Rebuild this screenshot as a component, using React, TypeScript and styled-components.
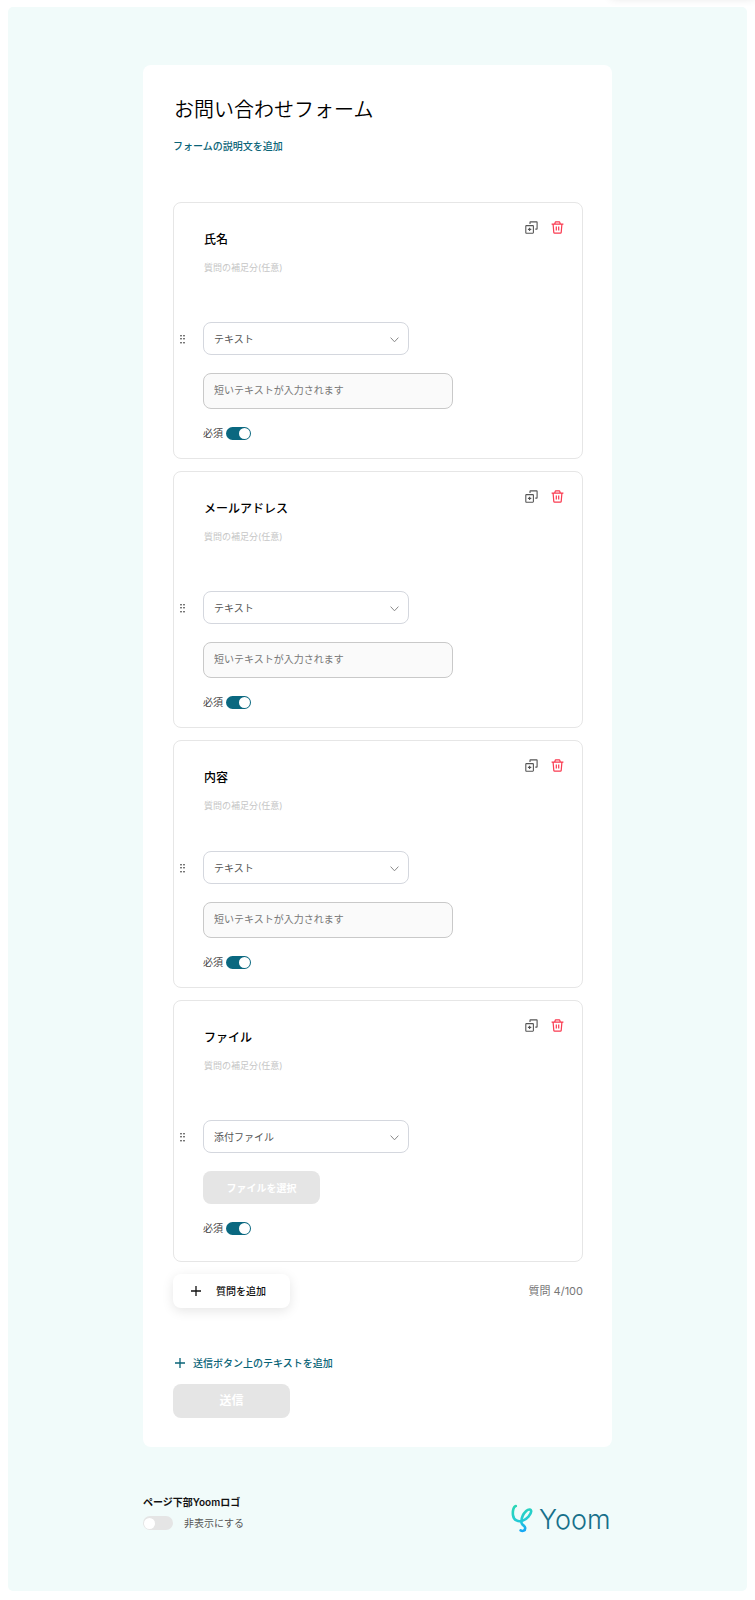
import React from "react";
import styled, { createGlobalStyle } from "styled-components";

const teal = "#0a6478";

const GlobalStyle = createGlobalStyle`
  *, *::before, *::after { box-sizing: border-box; }
  body {
    margin: 0;
    background: #fff;
    color: #111;
    font-family: Inter, "Noto Sans CJK JP", sans-serif;
    font-size: 10px;
    line-height: 16px;
  }
  button, input, select, textarea { font: inherit; color: inherit; margin: 0; }
  button { cursor: pointer; }
`;

const Page = styled.main`
  position: relative;
  margin: 7px 8px 10px;
  padding: 58px 16px 57px;
  border-radius: 5px;
  background: #f1fbfa;
  display: flex;
  flex-direction: column;
  align-items: center;
`;

const TopBarShadow = styled.div`
  position: absolute;
  top: -29px;
  right: -8px;
  width: 144px;
  height: 20px;
  box-shadow: 0 0 10px rgba(0, 0, 0, 0.12);
`;

const Overflow = styled.div`
  overflow: hidden;
`;

const Panel = styled.form`
  width: 100%;
  max-width: 469px;
  padding: 31px 29px 29px 30px;
  border-radius: 8px;
  background: #fff;
  display: flex;
  flex-direction: column;
`;

const FormTitle = styled.input`
  width: 100%;
  height: 28px;
  padding: 0 0 0 1px;
  border: 0;
  background: none;
  color: #000;
  font-size: 20px;
  line-height: 28px;
  font-weight: 350;
`;

const TextButton = styled.button`
  display: flex;
  align-items: center;
  gap: 8px;
  align-self: flex-start;
  height: 16px;
  padding: 0;
  border: 0;
  background: none;
  color: ${teal};
  font-weight: 500;
`;

const DescriptionLink = styled(TextButton)`
  margin: 14px 0 48px;
`;

const Questions = styled.div`
  display: flex;
  flex-direction: column;
  gap: 12px;
`;

const Card = styled.section<{ $file: boolean }>`
  position: relative;
  display: grid;
  grid-template-columns: 29px minmax(0, 1fr);
  padding: 27px 19px ${(p) => (p.$file ? 26 : 18)}px 0;
  border: 1px solid #e6e6e6;
  border-radius: 8px;
  background: #fff;

  & > * { grid-column: 2; }
`;

const CardActions = styled.div`
  position: absolute;
  top: 18px;
  right: 18px;
  display: flex;
  gap: 13px;
`;

const IconButton = styled.button<{ $danger?: boolean }>`
  width: 13px;
  height: 13px;
  padding: 0;
  border: 0;
  background: none;
  color: ${(p) => (p.$danger ? "#fa3a50" : "#555")};
  svg { display: block; }
`;

const QuestionTitle = styled.input`
  width: 100%;
  height: 20px;
  padding: 0 0 0 1px;
  border: 0;
  background: none;
  color: #000;
  font-size: 12px;
  line-height: 20px;
  font-weight: 500;
`;

const Note = styled.textarea<{ $short: boolean }>`
  display: block;
  width: 100%;
  height: ${(p) => (p.$short ? 53 : 62)}px;
  margin-top: 10px;
  padding: 0 0 0 1px;
  border: 0;
  background: none;
  resize: none;
  font-size: 9px;
  line-height: 16px;
  &::placeholder { color: #c6c6c6; opacity: 1; }
`;

const DragHandle = styled.button`
  && { grid-column: 1; }
  align-self: center;
  width: 17px;
  height: 16px;
  padding: 0 0 0 6px;
  border: 0;
  background: none;
  color: #777;
  cursor: grab;
  svg { display: block; }
`;

const SelectWrap = styled.div`
  position: relative;
  width: 206px;
  max-width: 100%;
  svg {
    position: absolute;
    right: 10px;
    top: 14px;
    pointer-events: none;
  }
`;

const Select = styled.select`
  appearance: none;
  display: block;
  width: 100%;
  height: 33px;
  padding: 0 24px 0 10px;
  border: 1px solid #d4d7de;
  border-radius: 8px;
  background: #fff;
  color: #555;
`;

const Answer = styled.input`
  width: 250px;
  max-width: 100%;
  height: 36px;
  margin-top: 18px;
  padding: 0 10px 2px;
  border: 1px solid #c9c9c9;
  border-radius: 8px;
  background: #fafafa;
  &::placeholder { color: #777; opacity: 1; }
`;

const GreyButton = styled.button<{ $large?: boolean }>`
  width: 117px;
  height: ${(p) => (p.$large ? 34 : 33)}px;
  padding: 0;
  border: 0;
  border-radius: 8px;
  background: #e5e5e5;
  color: #fff;
  font-size: ${(p) => (p.$large ? 12 : 10)}px;
  font-weight: 700;
`;

const FileButton = styled(GreyButton)`
  margin-top: 18px;
`;

const Required = styled.label`
  display: flex;
  align-items: center;
  gap: 3px;
  height: 14px;
  margin-top: 17px;
  color: #444;
`;

const Switch = styled.input<{ $wide?: boolean }>`
  appearance: none;
  flex: none;
  display: flex;
  align-items: center;
  width: ${(p) => (p.$wide ? 30 : 25)}px;
  height: ${(p) => (p.$wide ? 14 : 13)}px;
  padding: 0 1px;
  border-radius: 7px;
  background: #e5e5e5;
  cursor: pointer;

  &::before {
    content: "";
    width: 11px;
    height: 11px;
    border-radius: 50%;
    background: #fff;
  }
  &:checked { background: #0a6880; justify-content: flex-end; }
`;

const AddRow = styled.div`
  display: flex;
  align-items: center;
  justify-content: space-between;
  margin-top: 12px;
`;

const AddButton = styled.button`
  display: flex;
  align-items: center;
  gap: 15px;
  width: 117px;
  height: 34px;
  padding: 0 0 0 18px;
  border: 0;
  border-radius: 8px;
  background: #fff;
  box-shadow: 0 3px 12px rgba(0, 0, 0, 0.1);
  font-weight: 500;
`;

const Count = styled.span`
  color: #777;
  font-size: 11px;
`;

const SubmitTextButton = styled(TextButton)`
  margin: 47px 0 13px;
  padding-left: 2px;
`;

const Footer = styled.footer`
  display: flex;
  align-items: flex-end;
  justify-content: space-between;
  width: 100%;
  max-width: 469px;
  margin-top: 47px;
`;

const LogoSetting = styled.div`
  display: flex;
  flex-direction: column;
  gap: 5px;
  padding-bottom: 3px;
`;

const SettingTitle = styled.strong`
  font-weight: 600;
`;

const SettingLabel = styled.label`
  display: flex;
  align-items: center;
  gap: 11px;
  color: #555;
`;

function PlusIcon() {
  return (
    <svg width="10" height="10" viewBox="0 0 10 10" fill="none" stroke="currentColor" aria-hidden="true">
      <path d="M5 0v10M0 5h10" strokeWidth="1.3" />
    </svg>
  );
}

function DuplicateIcon() {
  return (
    <svg width="13" height="13" viewBox="0 0 13 13" fill="none" stroke="currentColor" strokeWidth="1.1" strokeLinejoin="round" aria-hidden="true">
      <rect x=".8" y="4.6" width="7.6" height="7.6" rx=".6" />
      <path d="M4.600 6.700v3.400M2.900 8.400h3.400M5 3V1.300q0-.4.4-.4h6.300q.4 0 .4.400v6.400q0 .4-.4.400H10.300" />
    </svg>
  );
}

function TrashIcon() {
  return (
    <svg width="13" height="13" viewBox="0 0 13 13" fill="none" stroke="currentColor" strokeWidth="1.2" strokeLinejoin="round" aria-hidden="true">
      <path d="M.6 3.200h11.800M2.100 3.200l.7 8.200q.1.800.8.800h5.800q.7 0 .8-.8l.7-8.200M3.700 3l.5-1.700q.1-.4.500-.4h3.600q.4 0 .5.400L9.300 3M5.300 5.600v4M7.700 5.600v4" />
    </svg>
  );
}

function ChevronIcon() {
  return (
    <svg width="9" height="8" viewBox="0 0 9 8" fill="none" stroke="#888" aria-hidden="true">
      <path d="M.6 1.6l3.900 4.200 3.900-4.200" />
    </svg>
  );
}

function DragIcon() {
  return (
    <svg width="5" height="10" viewBox="0 0 5 10" fill="currentColor" aria-hidden="true">
      {[0, 3].map((x) =>
        [1, 4, 8].map((y) => <rect key={`${x}-${y}`} x={x} y={y} width="2" height="1.4" />)
      )}
    </svg>
  );
}

function YoomLogo() {
  return (
    <svg width="102" height="31" viewBox="0 0 102 31" overflow="visible" role="img" aria-label="Yoom">
      <defs>
        <linearGradient id="mark" gradientUnits="userSpaceOnUse" x1="8" y1="2" x2="14" y2="29">
          <stop offset="0" stopColor="#2ad6b4" />
          <stop offset="0.55" stopColor="#24ccd4" />
          <stop offset="1" stopColor="#14a4f8" />
        </linearGradient>
      </defs>
      <path
        d="M5.800 3C3.600 3.400 2.400 8 3 12.200C3.800 17.400 8.200 19.200 12.800 17.600C17 16 21 11.400 21.200 8.400C21.200 6.200 18.600 5.800 16.200 8C13 11 11.200 15.200 11.400 19.400C11.600 22.400 15 22.200 15.200 24.800C15.400 27.800 12.600 28.600 10.600 27.400"
        fill="none"
        stroke="url(#mark)"
        strokeWidth="2.600"
        strokeLinecap="round"
        strokeLinejoin="round"
      />
      <text x="29" y="26" fontFamily="Inter, sans-serif" fontSize="27" fontWeight="300" fill="#17708a">
        Yoom
      </text>
    </svg>
  );
}

type Question = { title: string; type: "テキスト" | "添付ファイル"; short?: boolean };

const questions: Question[] = [
  { title: "氏名", type: "テキスト" },
  { title: "メールアドレス", type: "テキスト" },
  { title: "内容", type: "テキスト", short: true },
  { title: "ファイル", type: "添付ファイル" },
];

function QuestionCard({ title, type, short = false }: Question) {
  const isFile = type === "添付ファイル";
  return (
    <Card $file={isFile}>
      <QuestionTitle defaultValue={title} aria-label="質問" />
      <Note $short={short} placeholder="質問の補足分(任意)" aria-label="質問の補足分" />
      <DragHandle type="button" aria-label="並べ替え">
        <DragIcon />
      </DragHandle>
      <SelectWrap>
        <Select defaultValue={type} aria-label="回答の種類">
          <option>テキスト</option>
          <option>添付ファイル</option>
        </Select>
        <ChevronIcon />
      </SelectWrap>
      {isFile ? (
        <FileButton type="button">ファイルを選択</FileButton>
      ) : (
        <Answer placeholder="短いテキストが入力されます" aria-label="回答" readOnly />
      )}
      <Required>
        必須
        <Switch type="checkbox" defaultChecked />
      </Required>
      <CardActions>
        <IconButton type="button" aria-label="複製">
          <DuplicateIcon />
        </IconButton>
        <IconButton type="button" $danger aria-label="削除">
          <TrashIcon />
        </IconButton>
      </CardActions>
    </Card>
  );
}

export default function App() {
  return (
    <Overflow>
      <GlobalStyle />
      <Page>
        <TopBarShadow />
        <Panel>
          <FormTitle defaultValue="お問い合わせフォーム" aria-label="フォームのタイトル" />
          <DescriptionLink type="button">フォームの説明文を追加</DescriptionLink>
          <Questions>
            {questions.map((q) => (
              <QuestionCard key={q.title} {...q} />
            ))}
          </Questions>
          <AddRow>
            <AddButton type="button">
              <PlusIcon />
              質問を追加
            </AddButton>
            <Count>質問 4/100</Count>
          </AddRow>
          <SubmitTextButton type="button">
            <PlusIcon />
            送信ボタン上のテキストを追加
          </SubmitTextButton>
          <GreyButton type="button" $large>
            送信
          </GreyButton>
        </Panel>
        <Footer>
          <LogoSetting>
            <SettingTitle>ページ下部Yoomロゴ</SettingTitle>
            <SettingLabel>
              <Switch type="checkbox" $wide />
              非表示にする
            </SettingLabel>
          </LogoSetting>
          <YoomLogo />
        </Footer>
      </Page>
    </Overflow>
  );
}
